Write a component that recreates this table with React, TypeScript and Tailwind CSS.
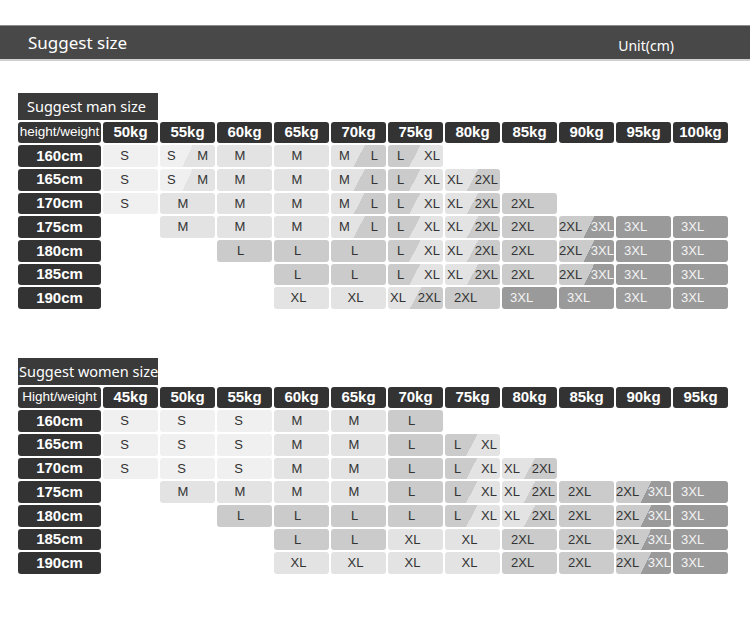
import React from "react";

type Row = [string, string[]];

type SizeTable = {
  title: string;
  corner: string;
  titlePad: string;
  weights: string[];
  rows: Row[];
};

const man: SizeTable = {
  title: "Suggest man size",
  corner: "height/weight",
  titlePad: "pl-[9px]",
  weights: ["50kg", "55kg", "60kg", "65kg", "70kg", "75kg", "80kg", "85kg", "90kg", "95kg", "100kg"],
  rows: [
    ["160cm", ["S", "S/M", "M", "M", "M/L", "L/XL", "", "", "", "", ""]],
    ["165cm", ["S", "S/M", "M", "M", "M/L", "L/XL", "XL/2XL", "", "", "", ""]],
    ["170cm", ["S", "M", "M", "M", "M/L", "L/XL", "XL/2XL", "2XL", "", "", ""]],
    ["175cm", ["", "M", "M", "M", "M/L", "L/XL", "XL/2XL", "2XL", "2XL/3XL", "3XL", "3XL"]],
    ["180cm", ["", "", "L", "L", "L", "L/XL", "XL/2XL", "2XL", "2XL/3XL", "3XL", "3XL"]],
    ["185cm", ["", "", "", "L", "L", "L/XL", "XL/2XL", "2XL", "2XL/3XL", "3XL", "3XL"]],
    ["190cm", ["", "", "", "XL", "XL", "XL/2XL", "2XL", "3XL", "3XL", "3XL", "3XL"]],
  ],
};

const women: SizeTable = {
  title: "Suggest women size",
  corner: "Hight/weight",
  titlePad: "pl-[1px]",
  weights: ["45kg", "50kg", "55kg", "60kg", "65kg", "70kg", "75kg", "80kg", "85kg", "90kg", "95kg"],
  rows: [
    ["160cm", ["S", "S", "S", "M", "M", "L", "", "", "", "", ""]],
    ["165cm", ["S", "S", "S", "M", "M", "L", "L/XL", "", "", "", ""]],
    ["170cm", ["S", "S", "S", "M", "M", "L", "L/XL", "XL/2XL", "", "", ""]],
    ["175cm", ["", "M", "M", "M", "M", "L", "L/XL", "XL/2XL", "2XL", "2XL/3XL", "3XL"]],
    ["180cm", ["", "", "L", "L", "L", "L", "L/XL", "XL/2XL", "2XL", "2XL/3XL", "3XL"]],
    ["185cm", ["", "", "", "L", "L", "XL", "XL", "2XL", "2XL", "2XL/3XL", "3XL"]],
    ["190cm", ["", "", "", "XL", "XL", "XL", "XL", "2XL", "2XL", "2XL/3XL", "3XL"]],
  ],
};

// flat shades for single sizes
const shade: Record<string, string> = {
  S: "bg-[#f0f0f0] justify-center pr-[12px]",
  M: "bg-[#e3e3e3] justify-center pr-[9px]",
  L: "bg-[#cbcbcb] justify-center pr-[8px]",
  XL: "bg-[#e3e3e3] justify-center pr-[6px]",
  "2XL": "bg-[#cbcbcb] pl-[9px]",
  "3XL": "bg-[#9a9a9a] pl-[8px] text-[#f4f4f4]",
};

// diagonal split between two sizes, "/" shaped
const split: Record<string, string> = {
  "S/M": "bg-[linear-gradient(115deg,#f0f0f0_50%,#e3e3e3_50%)] px-[7px]",
  "M/L": "bg-[linear-gradient(118deg,#e3e3e3_51%,#cbcbcb_51%)] px-[8px]",
  "L/XL": "bg-[linear-gradient(118deg,#cbcbcb_49%,#e3e3e3_49%)] pl-[9px] pr-[3px]",
  "XL/2XL": "bg-[linear-gradient(118deg,#e3e3e3_50%,#cbcbcb_50%)] px-[2px]",
  "2XL/3XL": "bg-[linear-gradient(116deg,#cbcbcb_54%,#9a9a9a_54%)] px-0",
};

function Cell({ value }: { value: string }) {
  if (!value) return <div />;
  if (value.includes("/")) {
    const [a, b] = value.split("/");
    return (
      <div className={`flex items-center justify-between rounded-[3px] text-[13px] ${split[value]}`}>
        <span className="text-[#333]">{a}</span>
        <span className={b === "3XL" ? "text-[#f4f4f4]" : "text-[#333]"}>{b}</span>
      </div>
    );
  }
  return (
    <div className={`flex items-center rounded-[3px] text-[13px] text-[#333] ${shade[value]}`}>
      {value}
    </div>
  );
}

function Table({ data }: { data: SizeTable }) {
  return (
    <div className="px-[18px]">
      <div
        className={`flex h-[27px] w-[140px] items-center whitespace-nowrap bg-[#3a3a3a] text-[14.5px] text-white ${data.titlePad}`}
        style={{ fontFamily: '"Noto Sans", sans-serif' }}
      >
        {data.title}
      </div>
      <div className="mt-[1.5px] grid grid-cols-[83px_repeat(11,55px)] auto-rows-[21.7px] gap-x-[2px] gap-y-[2px]">
        <div className="flex items-center justify-center rounded-[3px] bg-[#363636] text-[13.5px] whitespace-nowrap text-white">
          {data.corner}
        </div>
        {data.weights.map((w) => (
          <div
            key={w}
            className="flex items-center justify-center rounded-[3px] bg-[#333] text-[15px] font-bold text-white"
          >
            {w}
          </div>
        ))}
        {data.rows.map(([h, cells]) => (
          <React.Fragment key={h}>
            <div className="flex items-center justify-center rounded-[3px] bg-[#333] text-[15px] font-bold text-white">
              {h}
            </div>
            {cells.map((c, i) => (
              <Cell key={i} value={c} />
            ))}
          </React.Fragment>
        ))}
      </div>
    </div>
  );
}

export default function App() {
  return (
    <div
      className="min-h-[638px] w-[750px] bg-white pt-[25px] font-['Liberation_Sans',Arial,sans-serif]"
    >
      <div
        className="flex h-[36px] items-center justify-between border-t border-b-2 border-t-[#8c8c8c] border-b-[#d0d0d0] bg-[#484848] pl-[28px] pr-[76px] text-white"
        style={{ fontFamily: '"Noto Sans", sans-serif' }}
      >
        <span className="text-[17px]">Suggest size</span>
        <span className="mt-[6px] text-[14px]">Unit(cm)</span>
      </div>
      <div className="mt-[32px]">
        <Table data={man} />
      </div>
      <div className="mt-[49px]">
        <Table data={women} />
      </div>
    </div>
  );
}
